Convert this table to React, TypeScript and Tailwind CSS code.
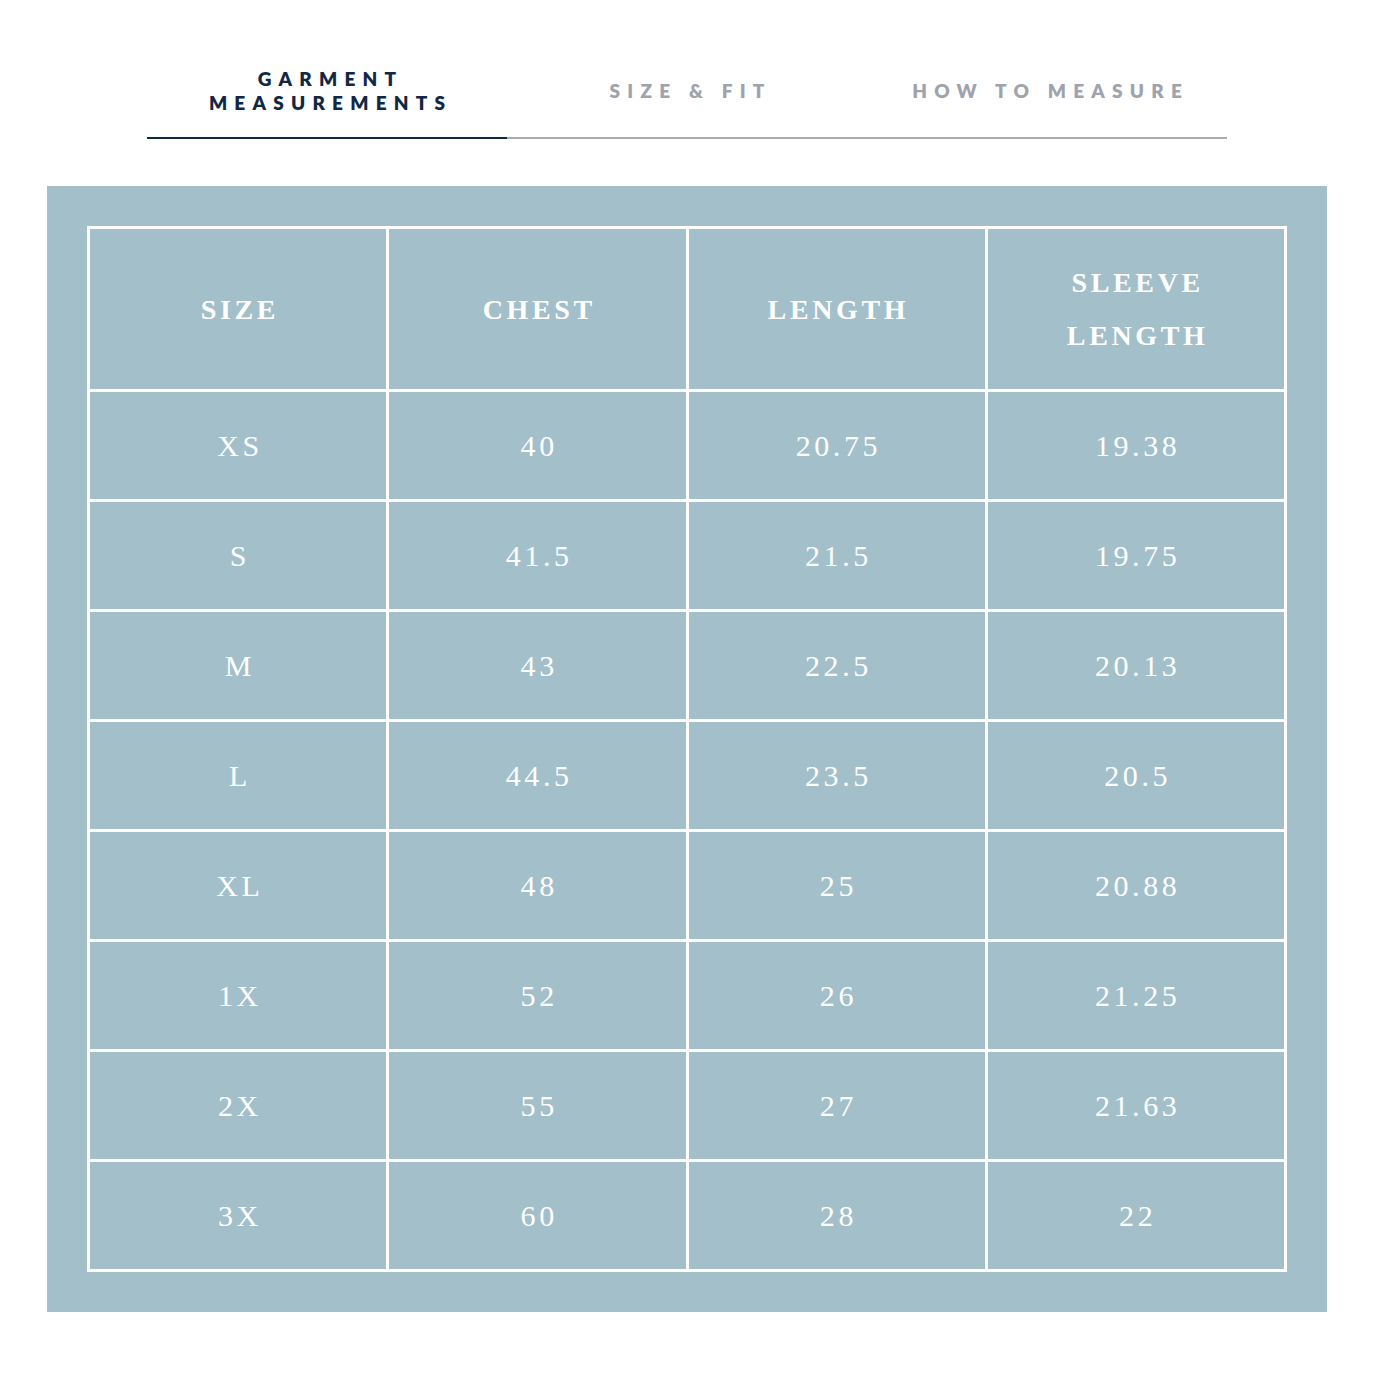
import React, { useState } from 'react';

const TABS = ['Garment Measurements', 'Size & Fit', 'How to Measure'];

const HEADERS = ['Size', 'Chest', 'Length', 'Sleeve Length'];

const ROWS: string[][] = [
  ['XS', '40', '20.75', '19.38'],
  ['S', '41.5', '21.5', '19.75'],
  ['M', '43', '22.5', '20.13'],
  ['L', '44.5', '23.5', '20.5'],
  ['XL', '48', '25', '20.88'],
  ['1X', '52', '26', '21.25'],
  ['2X', '55', '27', '21.63'],
  ['3X', '60', '28', '22'],
];

const sans = { fontFamily: 'Lato, "Open Sans", sans-serif' };
const serif = { fontFamily: '"Liberation Serif", "DejaVu Serif", serif' };

const App: React.FC = () => {
  const [active, setActive] = useState(0);

  return (
    <div className="min-h-[1388px] bg-white">
      <div className="ml-[47px] w-[1280px] pb-[75px]">
        {/* tabs */}
        <div className="mx-[100px] pt-[60px] flex border-b-2 border-[#a9acb3]" style={sans}>
          {TABS.map((tab, i) => (
            <button
              key={tab}
              onClick={() => setActive(i)}
              className={`flex-1 h-[79px] pb-[15px] -mb-[2px] flex items-center justify-center border-b-2 ${
                i === active ? 'border-[#112844] text-[#112844]' : 'border-transparent text-[#9ea3ad]'
              }`}
            >
              <span
                className={`uppercase font-extrabold text-[19px] leading-[24px] tracking-[0.38em] pl-[0.38em] text-center ${
                  i === 0 ? 'w-[260px]' : ''
                }`}
              >
                {tab}
              </span>
            </button>
          ))}
        </div>

        {/* size table */}
        <div className="mt-[47px] bg-[#a3c0ca] p-[40px]">
          <div className="grid grid-cols-4 gap-[3px] bg-white p-[3px]" style={serif}>
            {HEADERS.map(h => (
              <div
                key={h}
                className="h-[160px] bg-[#a3c0ca] flex items-center justify-center px-16 text-center text-white uppercase font-bold text-[28px] leading-[53px] tracking-[0.13em] pl-[calc(4rem+0.13em)]"
              >
                {h}
              </div>
            ))}
            {ROWS.map(row =>
              row.map((cell, j) => (
                <div
                  key={row[0] + j}
                  className="h-[107px] bg-[#a3c0ca] flex items-center justify-center text-white text-[30px] tracking-[0.12em] pl-[0.12em]"
                >
                  {cell}
                </div>
              ))
            )}
          </div>
        </div>
      </div>
    </div>
  );
};

export default App;
